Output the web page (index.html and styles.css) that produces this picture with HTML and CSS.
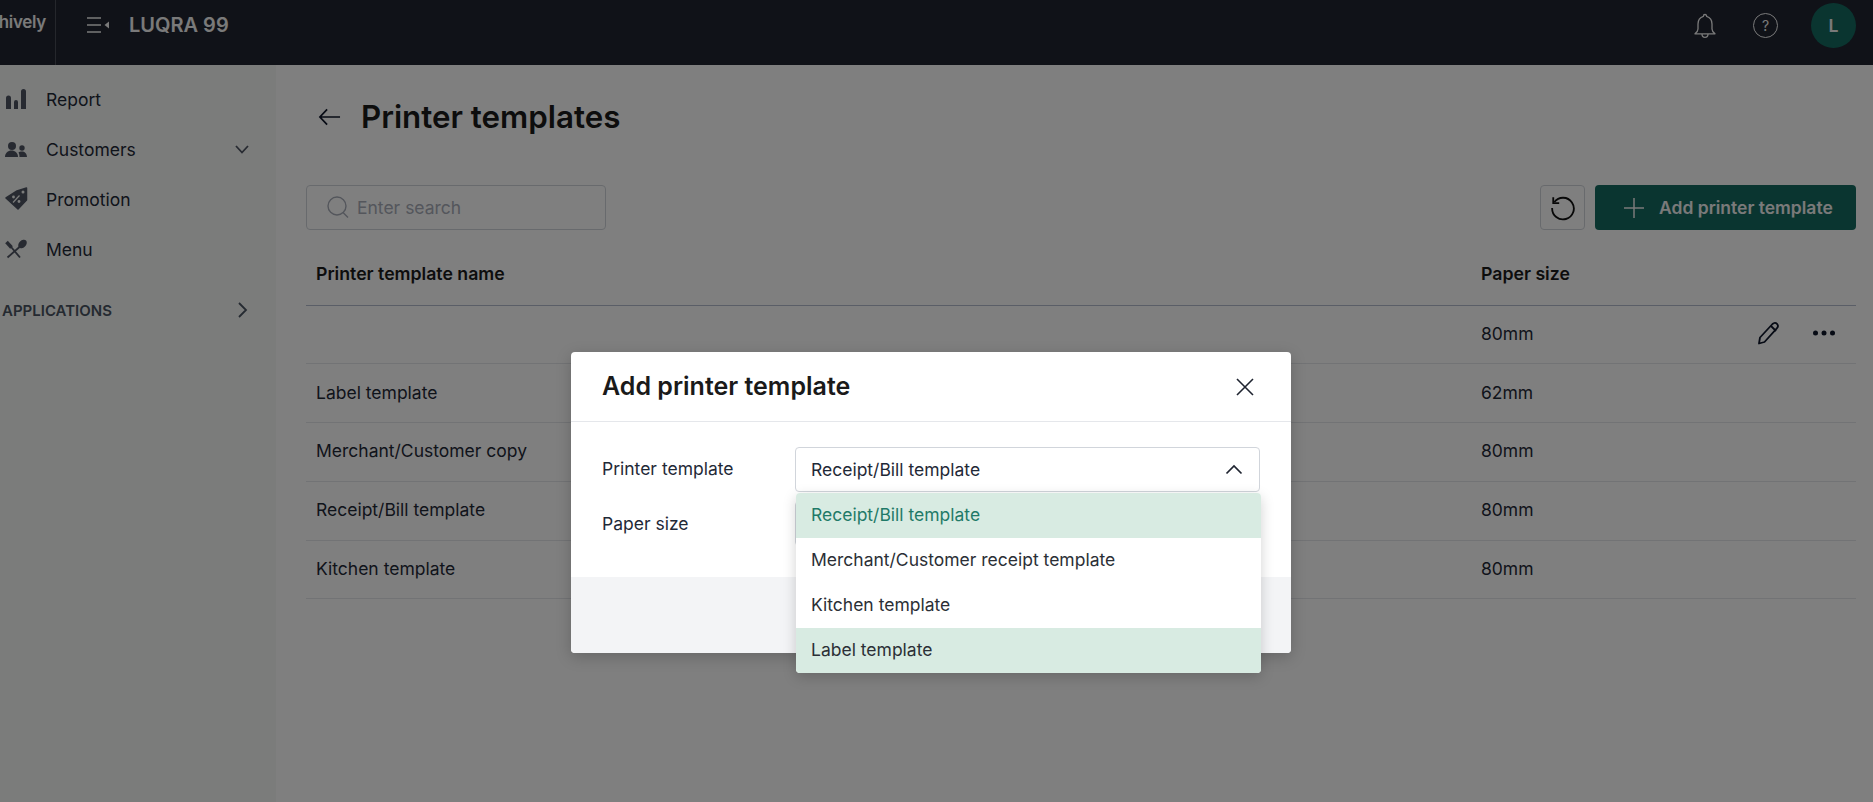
FILE: index.html
```html
<!DOCTYPE html>
<html lang="en">

<head>
    <meta charset="UTF-8">
    <meta name="viewport" content="width=device-width, initial-scale=1.0">
    <title>Printer templates</title>
    <link rel="stylesheet" href="styles.css">
</head>

<body>
    <header class="topbar">
        <div class="logo"><span>hively</span></div>
        <svg class="menu-toggle" width="24" height="20" viewBox="0 0 24 20" fill="none" stroke="#f4f4f4" stroke-width="1.6">
            <path d="M1 3h14M1 10h14M1 17h14" />
            <path d="M23 6.500v7L18.500 10z" fill="#f4f4f4" stroke="none" />
        </svg>
        <div class="store-name">LUQRA 99</div>
        <div class="topbar-right">
            <svg class="bell" width="24" height="26" viewBox="0 0 24 26" fill="none" stroke="#f4f4f4" stroke-width="1.3">
                <path d="M12 1.500c-1 0-1.600.8-1.600 1.800C6.800 4.300 5 7.300 5 11v5c0 1.800-1.300 3.400-3 4.800h20c-1.700-1.400-3-3-3-4.800v-5c0-3.700-1.800-6.700-5.400-7.700 0-1-.6-1.800-1.600-1.800z" stroke-linejoin="round" />
                <path d="M9 21c0 2 1.300 3.400 3 3.400s3-1.400 3-3.400" />
            </svg>
            <div class="help">?</div>
            <div class="avatar">L</div>
        </div>
    </header>

    <div class="layout">
        <aside class="sidebar">
            <a class="nav-item">
                <svg width="24" height="24" viewBox="0 0 24 24" fill="#4f5563">
                    <path d="M1 11a2.500 2.500 0 0 1 5 0v11H1zM9 15a2 2 0 0 1 4 0v7H9zM16 4.500a2.500 2.500 0 0 1 5 0V22h-5z" />
                </svg>
                <span>Report</span>
            </a>
            <a class="nav-item">
                <svg width="24" height="24" viewBox="0 0 24 24" fill="#4f5563">
                    <circle cx="7" cy="9" r="4" />
                    <path d="M0 20c0-4 3-6.500 6.500-6.500S13 16 13 20z" />
                    <circle cx="17" cy="11" r="2.700" />
                    <path d="M14.500 20c0-2-.3-3.300-1-4.500.8-.7 2-1 3.200-1 3 0 5.300 2 5.300 5.500z" />
                </svg>
                <span>Customers</span>
                <svg class="chev" width="16" height="16" viewBox="0 0 16 16" fill="none" stroke="#4f5563" stroke-width="1.800">
                    <path d="M2 5l6 6.500L14 5" />
                </svg>
            </a>
            <a class="nav-item">
                <svg width="24" height="24" viewBox="0 0 24 24">
                    <path d="M1 11l11-7 9.500-3v12L13 22z" fill="#4f5563" stroke="#4f5563" stroke-width="1.500" stroke-linejoin="round" />
                    <circle cx="18" cy="5" r="1.500" fill="#f6f8f6" />
                    <path d="M8 15.500l6.500-7" stroke="#f6f8f6" stroke-width="1.200" />
                    <circle cx="8.500" cy="10" r="1.400" fill="#f6f8f6" />
                    <circle cx="14" cy="14.500" r="1.400" fill="#f6f8f6" />
                </svg>
                <span>Promotion</span>
            </a>
            <a class="nav-item">
                <svg width="24" height="24" viewBox="0 0 24 24" fill="none" stroke="#4f5563" stroke-width="1.800">
                    <path d="M1.500 5l5 5.500" stroke-width="3.500" />
                    <path d="M4 7.500L15 20.500" />
                    <path d="M14.500 10L2.500 20.500" />
                    <ellipse cx="17.500" cy="7" rx="3.500" ry="5" transform="rotate(45 17.500 7)" fill="#4f5563" stroke="none" />
                </svg>
                <span>Menu</span>
            </a>
            <div class="nav-section">
                <span>APPLICATIONS</span>
                <svg class="chev" width="16" height="18" viewBox="0 0 16 18" fill="none" stroke="#4b5563" stroke-width="1.800">
                    <path d="M5 2l7 7-7 7" />
                </svg>
            </div>
        </aside>

        <main class="content">
            <div class="page-title">
                <svg width="23" height="20" viewBox="0 0 24 20" fill="none" stroke="#0f172a" stroke-width="1.800">
                    <path d="M23 10H2M9.500 2L2 10l7.500 8" />
                </svg>
                <h1>Printer templates</h1>
            </div>

            <div class="toolbar">
                <div class="search">
                    <svg width="24" height="26" viewBox="0 0 24 26" fill="none" stroke="#a8adb8" stroke-width="1.400">
                        <circle cx="11" cy="12" r="9" />
                        <path d="M17 18.500l5 5" />
                    </svg>
                    <span>Enter search</span>
                </div>
                <button class="reset-btn">
                    <svg width="26" height="26" viewBox="0 0 24 24" fill="none" stroke="#111" stroke-width="1.700">
                        <path d="M4 6.500A10 10 0 1 1 2 12" />
                        <path d="M3 2v5.500h5.500" />
                    </svg>
                </button>
                <button class="add-btn">
                    <svg width="20" height="20" viewBox="0 0 20 20" stroke="#f4f4f4" stroke-width="1.500">
                        <path d="M10 0v20M0 10h20" />
                    </svg>
                    Add printer template
                </button>
            </div>

            <table>
                <thead>
                    <tr>
                        <th class="name-col">Printer template name</th>
                        <th>Paper size</th>
                        <th class="action-col"></th>
                    </tr>
                </thead>
                <tbody>
                    <tr>
                        <td></td>
                        <td>80mm</td>
                        <td class="action-col">
                            <div class="actions">
                                <svg width="24" height="24" viewBox="0 0 24 24" fill="none" stroke="#0f172a" stroke-width="1.800" stroke-linejoin="round">
                                    <path d="M3 22.500l1-6L16.500 3c1.500-1.500 3.300-1.500 4.500-.2s1.300 3-.2 4.500L8.500 21z" />
                                    <path d="M15 5l5 5" />
                                </svg>
                                <svg width="24" height="8" viewBox="0 0 24 8" fill="#0f172a">
                                    <circle cx="3.500" cy="4" r="2.500" />
                                    <circle cx="12" cy="4" r="2.500" />
                                    <circle cx="20.500" cy="4" r="2.500" />
                                </svg>
                            </div>
                        </td>
                    </tr>
                    <tr>
                        <td>Label template</td>
                        <td>62mm</td>
                        <td></td>
                    </tr>
                    <tr>
                        <td>Merchant/Customer copy</td>
                        <td>80mm</td>
                        <td></td>
                    </tr>
                    <tr>
                        <td>Receipt/Bill template</td>
                        <td>80mm</td>
                        <td></td>
                    </tr>
                    <tr>
                        <td>Kitchen template</td>
                        <td>80mm</td>
                        <td></td>
                    </tr>
                </tbody>
            </table>
        </main>
    </div>

    <div class="overlay">
        <div class="modal">
            <div class="modal-head">
                <h2>Add printer template</h2>
                <svg width="20" height="20" viewBox="0 0 20 20" stroke="#1f2430" stroke-width="1.600">
                    <path d="M2 2l16 16M18 2L2 18" />
                </svg>
            </div>
            <div class="modal-body">
                <div class="form-row first-row">
                    <label>Printer template</label>
                    <div class="select">
                        <span>Receipt/Bill template</span>
                        <svg width="18" height="11" viewBox="0 0 18 11" fill="none" stroke="#1f2430" stroke-width="1.700">
                            <path d="M1.500 9.500L9 2l7.500 7.500" />
                        </svg>
                        <ul class="dropdown">
                            <li class="picked">Receipt/Bill template</li>
                            <li>Merchant/Customer receipt template</li>
                            <li>Kitchen template</li>
                            <li class="hovered">Label template</li>
                        </ul>
                    </div>
                </div>
                <div class="form-row">
                    <label class="size-label">Paper size</label>
                    <div class="select"></div>
                </div>
            </div>
            <div class="modal-foot"></div>
        </div>
    </div>
</body>

</html>
```

FILE: styles.css
```css
* {
    box-sizing: border-box;
}

html,
body {
    width: 1873px;
    height: 802px;
    margin: 0;
    overflow: hidden;
}

body {
    background-color: #ffffff;
    color: #1f2937;
    font-family: Inter, "Liberation Sans", sans-serif;
    font-size: 17.5px;
}

/* top bar */
.topbar {
    height: 65px;
    background-color: #202430;
    display: flex;
    align-items: flex-start;
    color: #f4f4f4;
}

.logo {
    width: 56px;
    height: 65px;
    border-right: 1px solid #4a4e58;
    display: flex;
    justify-content: flex-end;
    padding: 12px 9px 0 0;
    overflow: hidden;
    font-size: 17px;
    font-weight: 600;
    letter-spacing: -0.3px;
}

.menu-toggle {
    margin: 15px 0 0 30px;
}

.store-name {
    margin: 14px 0 0 19px;
    font-size: 20px;
    font-weight: 600;
    line-height: 22px;
}

.topbar-right {
    margin-left: auto;
    padding: 3px 17px 0 0;
    display: flex;
    align-items: center;
    height: 48px;
}

.help {
    width: 25px;
    height: 25px;
    margin-left: 36px;
    border: 1.3px solid #f4f4f4;
    border-radius: 50%;
    display: flex;
    justify-content: center;
    align-items: center;
    font-size: 14px;
}

.avatar {
    width: 45px;
    height: 45px;
    margin-left: 33px;
    border-radius: 50%;
    background-color: #146a60;
    display: flex;
    justify-content: center;
    align-items: center;
    font-size: 17.6px;
    font-weight: 600;
}

.layout {
    display: flex;
    height: 737px;
}

/* sidebar */
.sidebar {
    width: 276px;
    background-color: #f6f8f6;
    padding: 9px 0 0 5px;
    flex-shrink: 0;
}

.nav-item {
    height: 50px;
    display: flex;
    align-items: center;
    color: #1f2937;
}

.nav-item svg:first-child {
    flex-shrink: 0;
}

.nav-item span {
    margin-left: 17px;
}

.chev {
    margin-left: auto;
    margin-right: 26px;
}

.nav-section {
    height: 50px;
    margin: 11px 0 0 -3px;
    display: flex;
    align-items: center;
    font-size: 15px;
    font-weight: 600;
    color: #4b5563;
}

/* page */
.content {
    flex: 1;
    padding: 0 17px 0 30px;
}

.page-title {
    height: 104px;
    padding: 0 0 0 12px;
    display: flex;
    align-items: center;
}

.page-title h1 {
    margin: 0 0 0 20px;
    font-size: 31.3px;
    font-weight: 600;
    color: #1a1a1a;
}

.toolbar {
    margin-top: 16px;
    display: flex;
    gap: 10px;
}

.search {
    width: 300px;
    height: 45px;
    margin-right: auto;
    padding: 0 0 1px 19px;
    border: 1px solid #d1d5db;
    border-radius: 4px;
    display: flex;
    align-items: center;
    gap: 7px;
    color: #a8adb8;
}

.reset-btn {
    width: 45px;
    height: 45px;
    padding: 0;
    background: #ffffff;
    border: 1px solid #d1d5db;
    border-radius: 4px;
    display: flex;
    justify-content: center;
    align-items: center;
}

.add-btn {
    width: 261px;
    height: 45px;
    padding-left: 29px;
    background-color: #146a60;
    border: 0;
    border-radius: 4px;
    color: #f4f4f4;
    font-family: inherit;
    font-size: 17.5px;
    font-weight: 600;
    display: flex;
    align-items: center;
    gap: 15px;
}

table {
    width: 100%;
    margin-top: 15px;
    border-collapse: collapse;
    table-layout: fixed;
}

th,
td {
    height: 58.75px;
    padding: 0 0 2px 10px;
    text-align: left;
    border-bottom: 1px solid #e5e7eb;
}

th {
    height: 60px;
    font-size: 17.7px;
    font-weight: 600;
    color: #1a1a1a;
    border-bottom-color: #b4bccf;
}

.name-col {
    width: 1165px;
}

.action-col {
    width: 180px;
}

.actions {
    display: flex;
    justify-content: flex-end;
    align-items: center;
    gap: 32px;
    padding-right: 20px;
}

/* modal */
.overlay {
    position: absolute;
    top: 0;
    left: 0;
    width: 100%;
    height: 100%;
    background-color: rgba(0, 0, 0, 0.5);
    padding: 352px 0 0 571px;
}

.modal {
    width: 720px;
    height: 301px;
    background-color: #ffffff;
    border-radius: 4px;
    display: flex;
    flex-direction: column;
    box-shadow: 0 4px 16px rgba(0, 0, 0, 0.2);
}

.modal-head {
    height: 70px;
    padding: 0 36px 0 31px;
    border-bottom: 1px solid #e5e7eb;
    display: flex;
    justify-content: space-between;
    align-items: center;
}

.modal-head h2 {
    margin: -2px 0 0;
    font-size: 25px;
    font-weight: 600;
    color: #1a1a1a;
}

.modal-body {
    height: 155px;
    padding: 25px 31px 0 31px;
}

.form-row {
    display: flex;
    align-items: center;
    color: #1f2937;
}

.first-row {
    margin-bottom: 9px;
}

.form-row label {
    width: 193px;
    margin-top: -2px;
}

.form-row .size-label {
    margin-top: 0;
}

.select {
    flex: 1;
    height: 45px;
    padding: 0 16px 0 15px;
    border: 1px solid #d1d5db;
    border-radius: 4px;
    display: flex;
    justify-content: space-between;
    align-items: center;
    position: relative;
}

.dropdown {
    position: absolute;
    top: 45px;
    left: 0;
    width: 465px;
    margin: 0;
    padding: 0;
    list-style: none;
    background-color: #ffffff;
    border-radius: 4px;
    overflow: hidden;
    box-shadow: 0 4px 14px rgba(0, 0, 0, 0.18);
    z-index: 2;
}

.dropdown li {
    height: 45px;
    padding: 0 0 2px 15px;
    display: flex;
    align-items: center;
    color: #2b2f36;
}

.dropdown .picked {
    background-color: #d8ebe2;
    color: #1f7a68;
}

.dropdown .hovered {
    background-color: #d8ebe2;
}

.modal-foot {
    flex: 1;
    background-color: #f3f4f6;
    border-radius: 0 0 4px 4px;
}
```
